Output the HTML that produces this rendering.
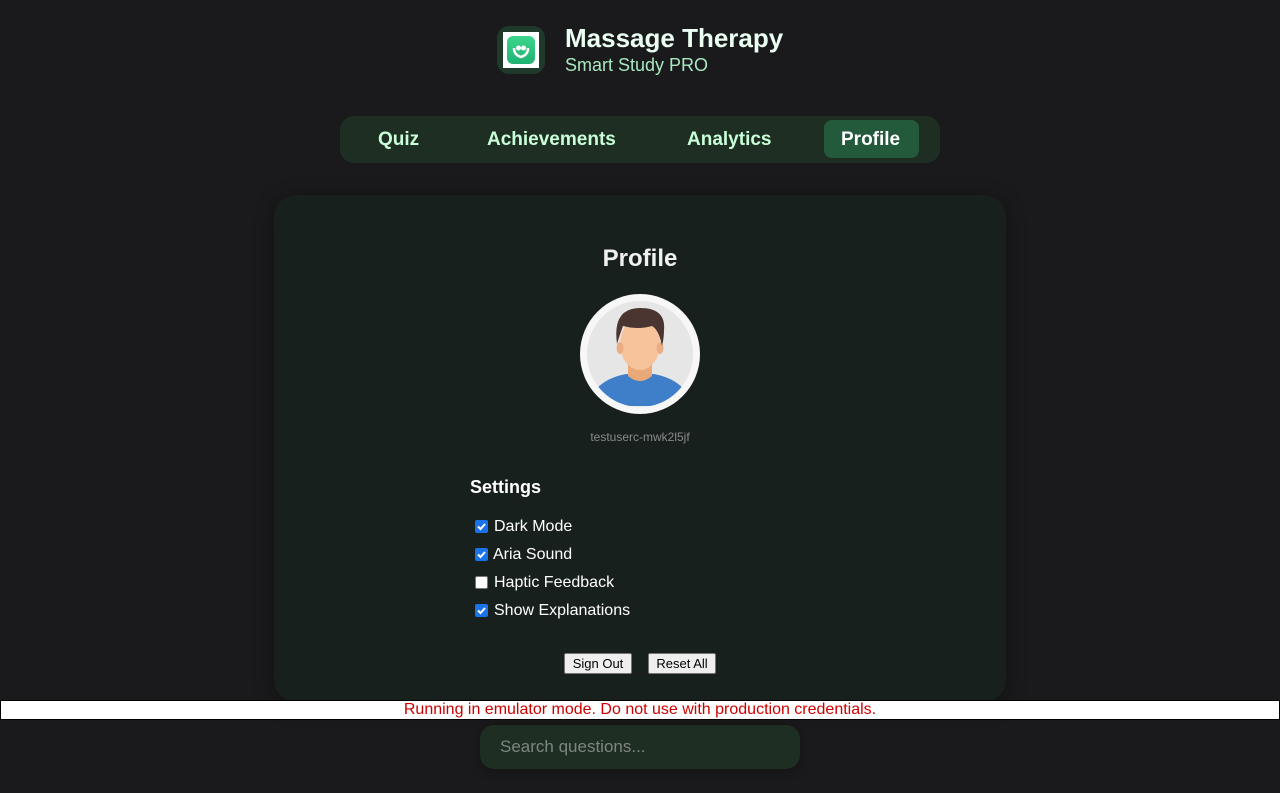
<!DOCTYPE html>
<html><head><meta charset="utf-8"><style>
*{margin:0;padding:0;box-sizing:border-box}
body{width:1280px;height:793px;background:#1a1a1c;font-family:"Liberation Sans",Arial,sans-serif;position:relative;overflow:hidden}
.abs{position:absolute}
.logo{left:497px;top:26px;width:48px;height:48px;border-radius:12px;background:#1f3a2a}
.logo .w{position:absolute;left:6px;top:6px;width:36px;height:36px;background:#fff}
.logo .g{position:absolute;left:10px;top:10px;width:28px;height:28px;border-radius:6px;background:linear-gradient(#3dd68c,#1fb272)}
.title{left:565px;top:23px;font-size:26px;font-weight:bold;color:#eafff2}
.sub{left:565px;top:55px;font-size:18px;color:#a8e8c0}
.nav{left:340px;top:116px;width:600px;height:47px;border-radius:14px;background:#1f2e23}
.active{left:824px;top:120px;width:95px;height:38px;border-radius:8px;background:#245a3c}
.card{left:274px;top:195px;width:732px;height:507px;border-radius:22px;background:#17201c;box-shadow:0 4px 20px rgba(0,0,0,.4)}
.cb{position:absolute;left:475px;width:13px;height:13px;border-radius:2px;background:#1a73e8}
.cb svg{display:block}
.lbl{position:absolute;left:494px;font-size:16px;color:#fff}
.btn{position:absolute;top:653px;height:21px;background:#efefef;border:1px solid #767676;border-radius:2px;font-size:13px;color:#000;text-align:center;line-height:19px}
.nv{position:absolute;top:129px;font-size:19px;font-weight:bold;color:#c8ffd8}
</style></head><body>
<div class="abs logo"><div class="w"></div><div class="g"></div>
<svg class="abs" style="left:14px;top:14px" width="20" height="20" viewBox="0 0 20 20"><path d="M3 8 Q3 15 10 17 Q17 15 17 8" fill="none" stroke="#fff" stroke-width="2.5"/><circle cx="7.5" cy="8" r="2.5" fill="#fff"/><circle cx="12.5" cy="8" r="2.5" fill="#fff"/></svg></div>
<div class="abs title">Massage Therapy</div>
<div class="abs sub">Smart Study PRO</div>
<div class="abs nav"></div>
<div class="abs active"></div>
<span class="nv" style="left:378px">Quiz</span>
<span class="nv" style="left:487px">Achievements</span>
<span class="nv" style="left:687px">Analytics</span>
<span class="nv" style="left:841px;color:#fff">Profile</span>
<div class="abs card"></div>
<div class="abs" style="left:0;width:1280px;top:245px;text-align:center;font-size:24px;font-weight:bold;color:#f0f0f0">Profile</div>
<svg class="abs" style="left:580px;top:294px" width="120" height="120" viewBox="0 0 120 120">
<defs><clipPath id="c"><circle cx="60" cy="60" r="53"/></clipPath></defs>
<circle cx="60" cy="60" r="60" fill="#f7f7f7"/>
<circle cx="60" cy="60" r="53" fill="#e6e6e6"/>
<g clip-path="url(#c)">
<path d="M8 112 Q14 86 46 80 L74 80 Q106 86 112 112 Z" fill="#3f7ec9"/>
<path d="M48 68 L48 82 Q60 92 72 82 L72 68 Z" fill="#e8a878"/>
<ellipse cx="60" cy="50" rx="20" ry="26" fill="#f6c39a"/>
<ellipse cx="40" cy="54" rx="3.5" ry="6" fill="#eaae84"/>
<ellipse cx="80" cy="54" rx="3.5" ry="6" fill="#eaae84"/>
<path d="M37 50 Q32 14 60 14 Q86 14 84 36 Q84 44 82 52 Q79 36 72 32 Q58 36 43 32 Q40 40 37 50 Z" fill="#4a3530"/>
</g></svg>
<div class="abs" style="left:0;width:1280px;top:430px;text-align:center;font-size:12px;color:#8a8a8a">testuserc-mwk2l5jf</div>
<div class="abs" style="left:470px;top:477px;font-size:18px;font-weight:bold;color:#fff">Settings</div>
<div class="cb" style="top:520px"><svg width="13" height="13"><path d="M3 6.5 L5.5 9 L10 4" stroke="#fff" stroke-width="2" fill="none"/></svg></div>
<div class="lbl" style="top:518px">Dark Mode</div>
<div class="cb" style="top:548px"><svg width="13" height="13"><path d="M3 6.5 L5.5 9 L10 4" stroke="#fff" stroke-width="2" fill="none"/></svg></div>
<div class="lbl" style="top:546px;left:493px">Aria Sound</div>
<div class="cb" style="top:576px;background:#fff;border:1px solid #767676"></div>
<div class="lbl" style="top:574px">Haptic Feedback</div>
<div class="cb" style="top:604px"><svg width="13" height="13"><path d="M3 6.5 L5.5 9 L10 4" stroke="#fff" stroke-width="2" fill="none"/></svg></div>
<div class="lbl" style="top:602px">Show Explanations</div>
<div class="btn" style="left:564px;width:68px">Sign Out</div>
<div class="btn" style="left:648px;width:68px">Reset All</div>
<div class="abs" style="left:0;top:700px;width:1280px;height:20px;background:#fff;border:1px solid #000;text-align:center;font-size:16px;color:#c00;line-height:18px">Running in emulator mode. Do not use with production credentials.</div>
<div class="abs" style="left:480px;top:725px;width:320px;height:44px;border-radius:14px;background:#1f2e23;box-shadow:0 2px 10px rgba(0,0,0,.3)"></div>
<div class="abs" style="left:500px;top:737px;font-size:17px;color:#7d857f">Search questions...</div>
</body></html>
